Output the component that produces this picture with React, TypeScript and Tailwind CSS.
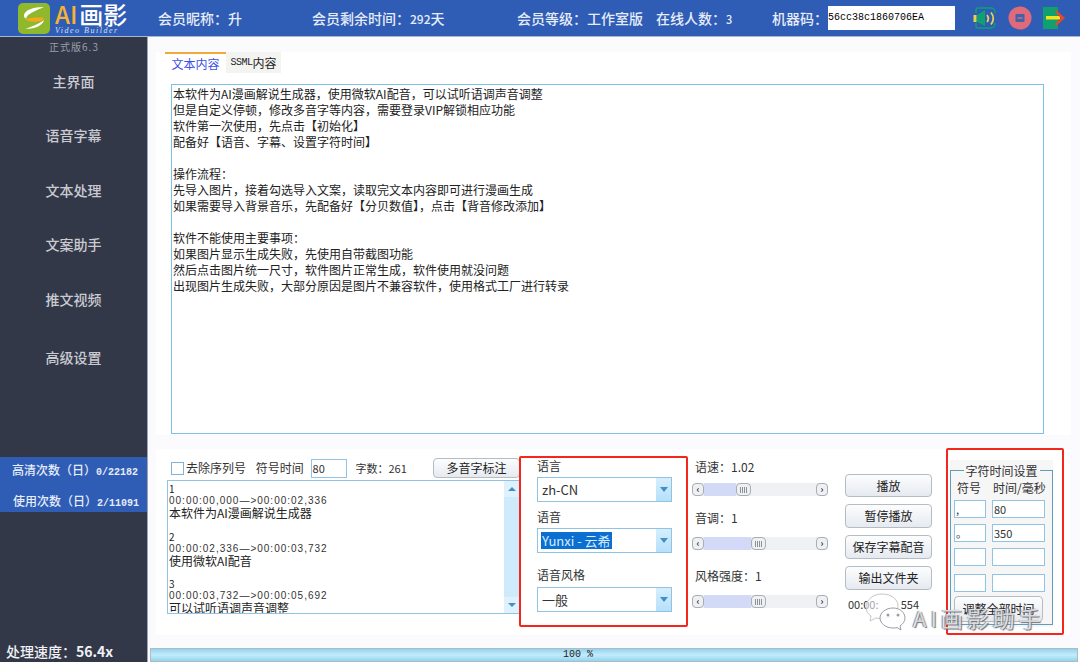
import React from "react";

const CJK = "font-['Noto_Sans_CJK_SC','Liberation_Sans',sans-serif]";

const mainLines = [
  "本软件为AI漫画解说生成器，使用微软AI配音，可以试听语调声音调整",
  "但是自定义停顿，修改多音字等内容，需要登录VIP解锁相应功能",
  "软件第一次使用，先点击【初始化】",
  "配备好【语音、字幕、设置字符时间】",
  "",
  "操作流程：",
  "先导入图片，接着勾选导入文案，读取完文本内容即可进行漫画生成",
  "如果需要导入背景音乐，先配备好【分贝数值】，点击【背音修改添加】",
  "",
  "软件不能使用主要事项：",
  "如果图片显示生成失败，先使用自带截图功能",
  "然后点击图片统一尺寸，软件图片正常生成，软件使用就没问题",
  "出现图片生成失败，大部分原因是图片不兼容软件，使用格式工厂进行转录",
];

const srt = [
  ["1", "00:00:00,000—>00:00:02,336", "本软件为AI漫画解说生成器"],
  ["2", "00:00:02,336—>00:00:03,732", "使用微软AI配音"],
  ["3", "00:00:03,732—>00:00:05,692", "可以试听语调声音调整"],
];

function Logo() {
  return (
    <svg width="32" height="31" viewBox="0 0 32 31" className="shrink-0">
      <rect x="0" y="0" width="32" height="31" rx="5" fill="#8fb82c" />
      <path d="M26 4C15 4 7 7 6 12c-.4 2 .6 3 2 3.500C9 11 17 8 26 4Z" fill="#fff" />
      <path d="M7 16.500c5-2 13-2.500 19-1.500-1 2.500-3 3.500-6 3.500-5 .5-9 0-13-2Z" fill="#f5a81c" />
      <path d="M26 17c-1 5-8 9-19 9 6-2 14-5 19-9Z" fill="#fff" />
    </svg>
  );
}

function SpeakerIcon() {
  return (
    <svg width="24" height="24" viewBox="0 0 24 24">
      <path d="M3 7V4a2 2 0 0 1 2-2h13a4 4 0 0 1 4 4v1M3 17v3a2 2 0 0 0 2 2h13a4 4 0 0 0 4-4v-1" fill="none" stroke="#0fa070" strokeWidth="1.500" />
      <rect x="0.500" y="9" width="3" height="7" fill="#e8d24a" />
      <path d="M4 9l8-5v16l-8-4Z" fill="#0fa070" />
      <path d="M14 9c1.500 2 1.500 5 0 7M18 6.500c3 3.500 3 8.500 0 12" fill="none" stroke="#e8d24a" strokeWidth="1.800" />
    </svg>
  );
}

function MinIcon() {
  return (
    <svg width="24" height="24" viewBox="0 0 24 24">
      <circle cx="12" cy="12" r="11.500" fill="#df6b7a" />
      <rect x="7.500" y="8" width="9" height="8" rx="1" fill="#3f62a8" />
      <rect x="9.500" y="11.300" width="5" height="1.400" fill="#df6b7a" />
    </svg>
  );
}

function ExitIcon() {
  return (
    <svg width="23" height="24" viewBox="0 0 23 24">
      <rect x="0" y="1" width="15" height="22" fill="#0fa070" />
      <rect x="3" y="10" width="14" height="3.500" fill="#f6e11f" />
      <path d="M13 4l9 8-9 8 -1-2 6-6-6-6Z" fill="#e8491f" />
    </svg>
  );
}

function Button({ label, className = "" }: { label: string; className?: string }) {
  return (
    <div
      className={`flex items-center justify-center rounded-sm border border-[#b4bcc4] bg-gradient-to-b from-[#fcfdfe] to-[#e6eaf0] text-[12px] leading-none text-[#222] ${className}`}
    >
      {label}
    </div>
  );
}

function Field({ value = "", className = "" }: { value?: string; className?: string }) {
  return (
    <div className={`flex items-center border border-[#8fc4e4] bg-white pl-[1px] text-[11px] leading-none text-[#333] ${className}`}>
      {value}
    </div>
  );
}

function Combo({ value, selected = false }: { value: string; selected?: boolean }) {
  return (
    <div className="flex h-[25px] w-[135px] items-center justify-between border border-[#8fc4e4] bg-white pl-[3px] text-[13px] leading-none text-[#333]">
      <span className={selected ? "bg-[#0a6fd0] px-[1px] py-[2px] text-[#d8ecff]" : "px-[1px]"}>{value}</span>
      <div className="flex h-full w-[15px] items-center justify-center bg-gradient-to-b from-[#d6eefc] to-[#b6e0fa]">
        <svg width="8" height="5" viewBox="0 0 8 5">
          <path d="M0 0h8L4 5Z" fill="#3f8fc8" />
        </svg>
      </div>
    </div>
  );
}

function Slider({ pct }: { pct: string }) {
  return (
    <div className="flex h-[13px] w-[136px] items-center rounded-sm bg-[#f0f1f5]">
      <div className="flex h-[13px] w-[12px] shrink-0 items-center justify-center rounded-sm border border-[#a9adb4] bg-[#eef0f3] text-[9px] font-bold leading-none text-[#333]">
        ‹
      </div>
      <div className="relative h-full flex-1">
        <div className="h-full bg-[#d2daf8]" style={{ width: pct }} />
        <div
          className="absolute top-0 flex h-[13px] w-[15px] items-center justify-center gap-[1px] rounded-sm border border-[#a9adb4] bg-[#eef0f3]"
          style={{ left: pct }}
        >
          <span className="h-[6px] w-px bg-[#8d9298]" />
          <span className="h-[6px] w-px bg-[#8d9298]" />
          <span className="h-[6px] w-px bg-[#8d9298]" />
          <span className="h-[6px] w-px bg-[#8d9298]" />
        </div>
      </div>
      <div className="flex h-[13px] w-[12px] shrink-0 items-center justify-center rounded-sm border border-[#a9adb4] bg-[#eef0f3] text-[9px] font-bold leading-none text-[#333]">
        ›
      </div>
    </div>
  );
}

function HeaderLabel({ children, className = "" }: { children: React.ReactNode; className?: string }) {
  return <div className={`whitespace-nowrap text-[14px] font-medium leading-none text-[#e6edfa] ${className}`}>{children}</div>;
}

function SideItem({ label, className = "" }: { label: string; className?: string }) {
  return <div className={`flex items-center justify-center text-[14px] font-medium leading-none text-[#c9cbd1] ${className}`}>{label}</div>;
}

export default function App() {
  return (
    <div className={`relative flex h-[662px] w-[1080px] flex-col overflow-hidden bg-white ${CJK}`}>
      {/* Header */}
      <header className="flex h-[37px] shrink-0 items-center border-b border-[#a8b8cf] bg-[#2f5cb4] pl-[18px]">
        <Logo />
        <div className="ml-[5px] flex w-[84px] shrink-0 flex-col">
          <div className="flex h-[24px] items-center text-[24px] font-medium leading-[24px]">
            <span className="text-[#f5b335]">AI</span>
            <span className="ml-[2px] text-white">画影</span>
          </div>
          <div className="h-[9px] whitespace-nowrap font-['Liberation_Serif',serif] text-[8px] italic leading-[9px] tracking-[1.500px] text-[#d6e0f2]">
            Video Builder
          </div>
        </div>
        <HeaderLabel className="ml-[19px] w-[154px]">会员昵称：升</HeaderLabel>
        <HeaderLabel className="w-[205px]">
          会员剩余时间：<span className="text-[12px]">292</span>天
        </HeaderLabel>
        <HeaderLabel className="w-[139px]">会员等级：工作室版</HeaderLabel>
        <HeaderLabel className="w-[116px]">
          在线人数：<span className="text-[11px]">3</span>
        </HeaderLabel>
        <HeaderLabel className="w-[56px]">机器码：</HeaderLabel>
        <div className="flex h-[24px] w-[127px] items-center bg-white font-['Liberation_Mono',monospace] text-[10px] leading-none text-black">
          56cc38c1860706EA
        </div>
        <div className="ml-[18px] flex w-[95px] items-center gap-[11px]">
          <SpeakerIcon />
          <MinIcon />
          <ExitIcon />
        </div>
      </header>

      <div className="flex min-h-0 flex-1">
        {/* Sidebar */}
        <aside className="flex w-[148px] shrink-0 flex-col border-r border-[#9aa5b5] bg-[#333849]">
          <div className="mt-[4px] flex h-[12px] items-center justify-center pl-[1px] text-[10px] leading-none tracking-[1px] text-[#9a9ea8]">
            正式版6.3
          </div>
          <SideItem label="主界面" className="mt-[21px] h-[14px]" />
          <SideItem label="语音字幕" className="mt-[40px] h-[14px]" />
          <SideItem label="文本处理" className="mt-[41px] h-[14px]" />
          <SideItem label="文案助手" className="mt-[40px] h-[14px]" />
          <SideItem label="推文视频" className="mt-[41px] h-[14px]" />
          <SideItem label="高级设置" className="mt-[44px] h-[14px]" />
          <div className="mt-[93px] flex h-[55px] flex-col justify-center gap-[14px] bg-[#2f5cb4] pl-[12px] pt-[4px] text-[12px] font-medium leading-[14px] text-[#e6edfa]">
            <div className="whitespace-nowrap">
              高清次数（日）<span className="font-['Liberation_Mono',monospace] text-[10px] font-bold">0/22182</span>
            </div>
            <div className="whitespace-nowrap pl-[1px]">
              使用次数（日）<span className="font-['Liberation_Mono',monospace] text-[10px] font-bold">2/11091</span>
            </div>
          </div>
          <div className="mt-auto mb-[3px] whitespace-nowrap pl-[6px] text-[14px] font-medium leading-[16px] text-[#f0f1f4]">
            处理速度：<span className="font-bold">56.4x</span>
          </div>
        </aside>

        {/* Main */}
        <main className="flex min-w-0 flex-1 flex-col bg-[#fbfbfe]">
          <div className="ml-[8px] mr-[9px] mt-[15px] flex h-[395px] flex-col bg-white pl-[9px] pt-0">
            <div className="flex h-[21px] items-stretch text-[12px] leading-none">
              <div className="flex w-[61px] items-center justify-center border-t-2 border-[#f0a93a] text-[#3a4fe8]">文本内容</div>
              <div className="flex w-[55px] items-center justify-center bg-[#f3f3f1] text-[12px] text-[#222]">
                <span className="font-['Liberation_Mono',monospace] text-[10px] tracking-[-0.5px]">SSML</span>内容
              </div>
            </div>
            <div className="mt-[11px] ml-[6px] flex h-[350px] w-[873px] flex-col border border-[#7fc0e6] bg-white pl-[1px] pt-[1px] text-[12px] leading-[16px] text-[#222]">
              {mainLines.map((l, i) => (
                <div key={i} className="h-[16px] whitespace-nowrap">
                  {l}
                </div>
              ))}
            </div>
          </div>

          {/* Bottom panel */}
          <div className="mx-[8px] mt-[14px] flex h-[187px] w-[914px] bg-white">
            {/* Left col */}
            <div className="ml-[11px] mt-[9px] flex w-[353px] shrink-0 flex-col">
              <div className="flex h-[20px] items-center text-[12px] leading-none text-[#333]">
                <div className="ml-[4px] h-[13px] w-[13px] border border-[#7fb4d8] bg-white" />
                <span className="ml-[2px] w-[70px]">去除序列号</span>
                <span className="w-[55px]">符号时间</span>
                <Field value="80" className="h-[19px] w-[37px]" />
                <span className="ml-[8px] w-[78px] text-[11px]">字数：261</span>
                <Button label="多音字标注" className="h-[20px] w-[87px]" />
              </div>
              <div className="mt-[2px] flex h-[134px] w-[353px] border border-[#8fc4e4] bg-white">
                <div className="min-w-0 flex-1 overflow-hidden pl-[1px] pt-[1px] text-[12px] text-[#222]">
                  {srt.map(([n, t, s], i) => (
                    <div key={i} className="h-[47.500px]">
                      <div className="h-[14px] text-[10px] leading-[14px]">{n}</div>
                      <div className="h-[10px] whitespace-nowrap font-['Liberation_Sans',sans-serif] text-[10px] leading-[10px] tracking-[1px] text-[#333]">{t}</div>
                      <div className="h-[14px] leading-[14px]">{s}</div>
                    </div>
                  ))}
                </div>
                <div className="flex w-[15px] shrink-0 flex-col justify-between bg-[#cfeafb]">
                  <div className="flex h-[16px] items-center justify-center bg-[#dff1fc]">
                    <svg width="8" height="4" viewBox="0 0 8 4"><path d="M0 4h8L4 0Z" fill="#3f8fc8" /></svg>
                  </div>
                  <div className="flex h-[16px] items-center justify-center bg-[#dff1fc]">
                    <svg width="8" height="4" viewBox="0 0 8 4"><path d="M0 0h8L4 4Z" fill="#3f8fc8" /></svg>
                  </div>
                </div>
              </div>
            </div>

            {/* Voice red box */}
            <div className="mt-[7px] ml-[-1px] h-[171px] w-[169px] shrink-0 rounded-[2px] border-[2px] border-[#f5261c] pl-[16px] text-[12px] leading-none text-[#333]">
              <div className="flex h-[16px] items-center">语言</div>
              <div className="mt-[3px]"><Combo value="zh-CN" /></div>
              <div className="mt-[7px] flex h-[16px] items-center">语音</div>
              <div className="mt-[3px]"><Combo value="Yunxi - 云希" selected /></div>
              <div className="mt-[14px] flex h-[16px] items-center">语音风格</div>
              <div className="mt-[4px]"><Combo value="一般" /></div>
            </div>

            {/* Sliders */}
            <div className="ml-[4px] mt-[9px] w-[136px] shrink-0 text-[12px] leading-none text-[#333]">
              <div className="ml-[3px] mt-[2px] flex h-[14px] items-center">语速：1.02</div>
              <div className="mt-[9px]"><Slider pct="29%" /></div>
              <div className="ml-[3px] mt-[15px] flex h-[14px] items-center">音调：1</div>
              <div className="mt-[12px]"><Slider pct="42%" /></div>
              <div className="ml-[3px] mt-[19px] flex h-[14px] items-center">风格强度：1</div>
              <div className="mt-[12px]"><Slider pct="42%" /></div>
            </div>

            {/* Buttons */}
            <div className="ml-[17px] mt-[25px] flex w-[87px] shrink-0 flex-col">
              <Button label="播放" className="h-[23px]" />
              <Button label="暂停播放" className="mt-[7px] h-[24px]" />
              <Button label="保存字幕配音" className="mt-[7px] h-[24px]" />
              <Button label="输出文件夹" className="mt-[7px] h-[24px]" />
              <div className="mt-[7px] flex w-[74px] justify-between whitespace-nowrap pl-[3px] text-[11px] leading-[14px] text-[#333]">
                <span>00:00:</span>
                <span>554</span>
              </div>
            </div>

            {/* Char time red box */}
            <div className="ml-[14px] mt-[-1px] h-[187px] w-[118px] shrink-0 rounded-[2px] border-[2px] border-[#f5261c] bg-white pr-[9px] pl-[2px] pt-[10px] text-[12px] leading-none text-[#333]">
              <div className="h-[167px] bg-[#f6f6f7] pt-[10px]">
                <div className="h-[155px] border border-[#5f9dbd]">
                  <div className="mx-auto mt-[-7px] h-[14px] w-[76px] bg-[#f6f6f7] text-center leading-[14px]">字符时间设置</div>
                  <div className="mt-[3px] flex h-[14px] items-center">
                    <span className="ml-[6px] w-[36px]">符号</span>
                    <span>时间/毫秒</span>
                  </div>
                  <div className="mt-[5px] grid grid-cols-[32px_53px] gap-x-[6px] gap-y-[6px] pl-[3px]">
                    <Field value="," className="h-[18px]" />
                    <Field value="80" className="h-[18px]" />
                    <Field value="。" className="h-[18px]" />
                    <Field value="350" className="h-[18px]" />
                    <Field className="h-[18px]" />
                    <Field className="h-[18px]" />
                    <Field className="mt-[2px] h-[18px]" />
                    <Field className="mt-[2px] h-[18px]" />
                  </div>
                  <Button label="调整全部时间" className="ml-[3px] mt-[4px] h-[26px] w-[89px]" />
                </div>
              </div>
            </div>
          </div>

          {/* Progress bar */}
          <div className="ml-[2px] mt-[13px] flex h-[14px] w-[928px] items-center justify-start border border-[#b5b9bd] bg-gradient-to-b from-[#8fd4f2] via-[#c4ecfb] to-[#8fd4f2] pl-[412px] font-['Liberation_Mono',monospace] text-[10px] leading-none text-[#222]">
            100 %
          </div>
        </main>
      </div>

      {/* Watermark overlay */}
      <div className="absolute left-[865px] top-[593px] flex items-start">
        <svg width="43" height="38" viewBox="0 0 43 38" className="shrink-0">
          <path d="M17 1C8 1 1 7 1 14c0 4 2 7 5 9l-1 5 6-3c2 .5 4 .5 6 .5C26 25.500 33 20 33 13 33 6 26 1 17 1Z" fill="#fff" fillOpacity="0.55" stroke="#c4c6ca" strokeWidth="1" />
          <path d="M28 15c-7 0-13 4.500-13 10s6 10 13 10c1.500 0 3 0 4-.5l4 2.500-1-4c3-2 5-5 5-8 0-5.500-5-10-12-10Z" fill="#fff" fillOpacity="0.85" stroke="#9a9ea4" strokeWidth="1" />
          <circle cx="23" cy="22" r="1.500" fill="#9a9ea4" />
          <circle cx="33" cy="22" r="1.500" fill="#9a9ea4" />
        </svg>
        <span className="ml-[5px] mt-[12px] whitespace-nowrap text-[22px] font-normal leading-[24px] tracking-[4px] text-white/70 [text-shadow:1px_1px_1px_#6b7078,-1px_0_1px_#8a8f96]">
          AI画影助手
        </span>
      </div>
    </div>
  );
}
